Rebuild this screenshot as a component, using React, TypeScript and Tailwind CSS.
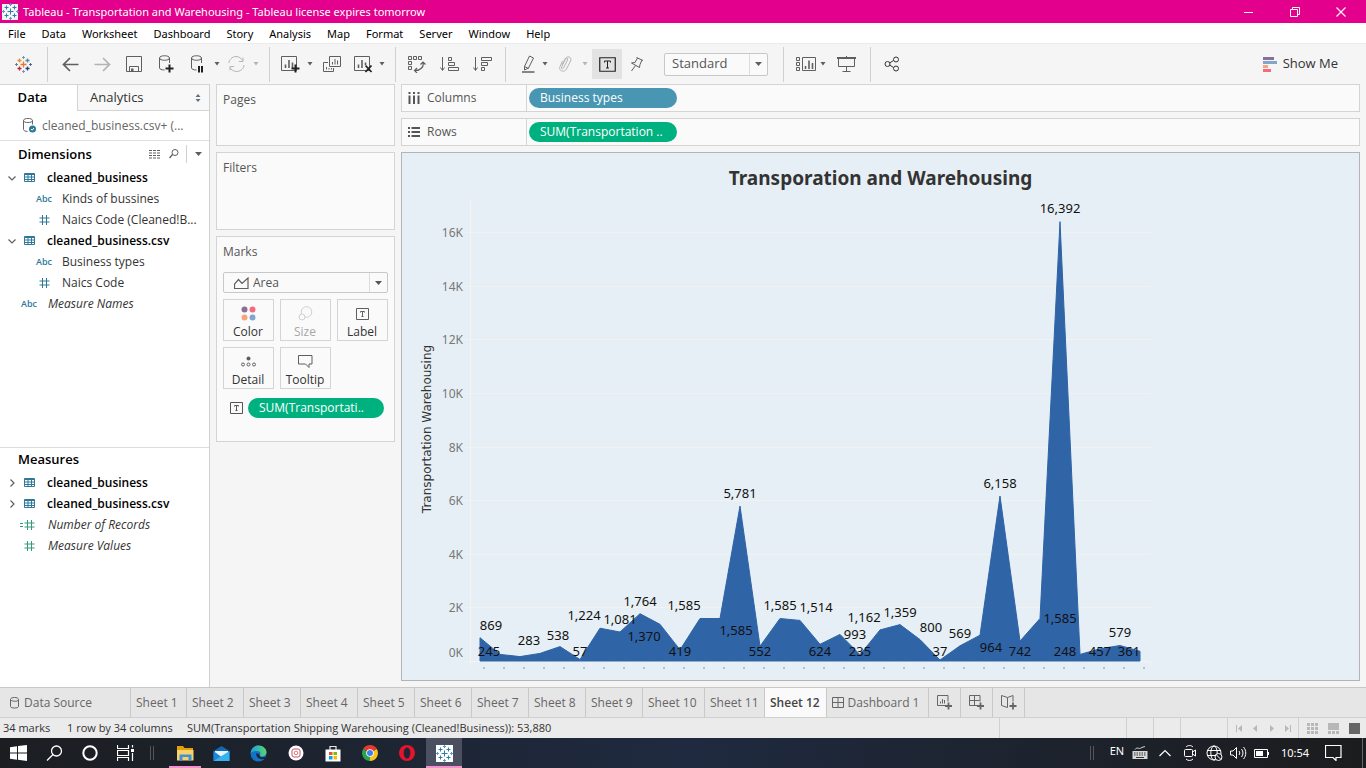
import React from "react";

type IconProps = { w: number; h: number; children: React.ReactNode; className?: string };

function Icon({ w, h, children, className = "" }: IconProps) {
  return (
    <svg
      width={w}
      height={h}
      viewBox={`0 0 ${w} ${h}`}
      fill="none"
      stroke="currentColor"
      aria-hidden="true"
      className={`shrink-0 ${className}`}
    >
      {children}
    </svg>
  );
}

function TableauMark({ colors, thick }: { colors: string[]; thick?: boolean }) {
  const [center, nw, ne, sw, se, n, s, w, e] = colors;
  const arm = thick ? 1.3 : 1;
  return (
    <Icon w={17} h={17}>
      <path d="M8.5 5.5v6M5.5 8.500h6" stroke={center} strokeWidth={arm} />
      <path d="M4.5 2.500v4M2.500 4.500h4" stroke={nw} strokeWidth={arm} />
      <path d="M12.5 2.500v4M10.500 4.500h4" stroke={ne} strokeWidth={arm} />
      <path d="M4.5 10.500v4M2.500 12.500h4" stroke={sw} strokeWidth={arm} />
      <path d="M12.5 10.500v4M10.500 12.500h4" stroke={se} strokeWidth={arm} />
      <path d="M8.5 0v3M7 1.500h3" stroke={n} />
      <path d="M8.5 14v3M7 15.500h3" stroke={s} />
      <path d="M1.500 7v3M0 8.500h3" stroke={w} />
      <path d="M15.500 7v3M14 8.500h3" stroke={e} />
    </Icon>
  );
}

const BLUE_MARK = ["#2f7cab", "#2f7cab", "#2f7cab", "#2f7cab", "#2f7cab", "#5c9cc0", "#5c9cc0", "#5c9cc0", "#5c9cc0"];
const COLOR_MARK = ["#e8762c", "#eb912c", "#59879b", "#c72035", "#1f447e", "#7199a6", "#7e96b0", "#5b879b", "#5b6591"];

function Caret({ className = "" }: { className?: string }) {
  return (
    <Icon w={8} h={4} className={className}>
      <path d="M1.500 0h5L4 3.500z" fill="currentColor" stroke="none" />
    </Icon>
  );
}

function ToolButton({ label, className, children }: { label: string; className: string; children: React.ReactNode }) {
  return (
    <button type="button" aria-label={label} className={`flex h-[30px] shrink-0 items-center justify-center ${className}`}>
      {children}
    </button>
  );
}

function Divider({ className }: { className: string }) {
  return <div className={`h-[35px] w-px shrink-0 bg-[#d0d0d0] ${className}`} />;
}

function TitleBar() {
  return (
    <header className="flex h-[23px] shrink-0 items-center bg-[#e3008c] text-white">
      <span className="ml-0.5 flex size-4 items-center justify-center bg-[#f4f4f4]">
        <TableauMark colors={BLUE_MARK} />
      </span>
      <h1 className="ml-[5px] flex-1 text-[11px] leading-4">
        Tableau - Transportation and Warehousing - Tableau license expires tomorrow
      </h1>
      <button type="button" aria-label="Minimize" className="flex h-5 w-[46px] items-center justify-center">
        <Icon w={10} h={10}><path d="M0 5.500h9" /></Icon>
      </button>
      <button type="button" aria-label="Restore" className="flex h-5 w-[46px] items-center justify-center">
        <Icon w={10} h={10}><path d="M.500 2.500h7v7h-7zM2.500 2.500v-2h7v7h-2" /></Icon>
      </button>
      <button type="button" aria-label="Close" className="mr-0.5 flex h-5 w-[46px] items-center justify-center">
        <Icon w={10} h={10}><path d="M.500.500l9 9M9.500.500l-9 9" strokeWidth="1.1" /></Icon>
      </button>
    </header>
  );
}

const MENUS = ["File", "Data", "Worksheet", "Dashboard", "Story", "Analysis", "Map", "Format", "Server", "Window", "Help"];

function MenuBar() {
  return (
    <nav className="flex h-5 shrink-0 items-center gap-4 bg-white pt-px pl-2 text-[11px] leading-4 text-black">
      {MENUS.map((m) => (
        <button type="button" key={m}>{m}</button>
      ))}
    </nav>
  );
}

function Toolbar() {
  return (
    <div className="flex h-[41px] shrink-0 items-center border-t border-[#ececec] bg-[#f5f5f5] text-[#5f5f5f]">
      <ToolButton label="Start page" className="w-[47px]"><TableauMark colors={COLOR_MARK} thick /></ToolButton>
      <Divider className="mr-1.5" />
      <ToolButton label="Undo" className="w-8">
        <Icon w={17} h={15}><path d="M16.500 7.500H1.500M8 1L1.500 7.500 8 14" strokeWidth="1.700" /></Icon>
      </ToolButton>
      <ToolButton label="Redo" className="w-8 text-[#b4b4b4]">
        <Icon w={17} h={15}><path d="M.500 7.500h15M9 1l6.500 6.500L9 14" strokeWidth="1.700" /></Icon>
      </ToolButton>
      <ToolButton label="Save" className="w-8">
        <Icon w={16} h={16}><path d="M.500.500h15v15H.500zM3.500 15.500v-5h9v5" /><path d="M5 12.500h2.500v3H5z" fill="currentColor" stroke="none" /></Icon>
      </ToolButton>
      <ToolButton label="New data source" className="w-8">
        <Icon w={16} h={18}>
          <path d="M1.500 3v10c0 1 2 2 5 2M11.500 3v5M1.500 3c0-3 10-3 10 0s-10 3-10 0z" />
          <path d="M11.500 9.500v8M7.500 13.500h8" stroke="#222" strokeWidth="2" />
        </Icon>
      </ToolButton>
      <ToolButton label="Pause auto updates" className="w-[30px]">
        <Icon w={14} h={18}>
          <path d="M1.500 3v10c0 1 2 2 5 2M11.500 3v5M1.500 3c0-3 10-3 10 0s-10 3-10 0z" />
          <path d="M9 11v6.500M12 11v6.500" stroke="#222" strokeWidth="2" />
        </Icon>
      </ToolButton>
      <Caret className="ml-px" />
      <ToolButton label="Refresh" className="w-[31px] text-[#b4b4b4]">
        <Icon w={17} h={16}>
          <path d="M1 7c0-3 3-6.500 7-6.500 3 0 5.500 2 6.500 4M16 9c0 3-3 6.500-7.500 6.500-3 0-5.500-2-6.500-4" />
          <path d="M15 1.500V5.500H11M2 14.500V10.500H6" />
        </Icon>
      </ToolButton>
      <Caret className="text-[#b4b4b4]" />
      <Divider className="mr-1 ml-[9px]" />
      <ToolButton label="New worksheet" className="w-8">
        <Icon w={19} h={18}>
          <path d="M.500 1.500h15v14H.500z" /><path d="M4.500 13V9.500M8 13V5M11.500 13V7.500" strokeWidth="1.600" />
          <path d="M14.500 9.500v8M10.500 13.500h8" stroke="#222" strokeWidth="2" />
        </Icon>
      </ToolButton>
      <Caret />
      <ToolButton label="Duplicate" className="ml-0.5 w-8">
        <Icon w={18} h={16}>
          <path d="M6.500.500h11v10h-11z" /><path d="M9.500 8.500V6M12 8.500V3M14.500 8.500V4.500M3.500 13.500V11M6 13.500V12M8.500 13.500V12" />
          <path d="M5 6.500H.500v9h10V12" />
        </Icon>
      </ToolButton>
      <ToolButton label="Clear sheet" className="w-[30px]">
        <Icon w={19} h={18}>
          <path d="M.500 1.500h15v14H.500z" /><path d="M4.500 13V9.500M8 13V5M11.500 10V7.500" strokeWidth="1.600" />
          <path d="M11.500 10.500l6 6.500M17.500 10.500l-6 6.500" stroke="#222" strokeWidth="1.800" />
        </Icon>
      </ToolButton>
      <Caret />
      <Divider className="mr-[5px] ml-[9px]" />
      <ToolButton label="Swap rows and columns" className="w-8">
        <Icon w={18} h={17}>
          <path d="M.500.500h3v3h-3zM5.500.500h3v3h-3zM10.500.500h3v3h-3zM.500 5.500h3v3h-3zM.500 10.500h3v3h-3z" />
          <path d="M15 6.500c1 4-2 8-8 8M12.500 8.500L15 6l2.500 2.500M9 12l-2.500 2.500L9 17" strokeWidth="1.200" />
        </Icon>
      </ToolButton>
      <ToolButton label="Sort ascending" className="w-[33px]">
        <Icon w={19} h={15}>
          <path d="M2.500 0v13M.500 10.500l2 3 2-3M8.500.500h3v3h-3zM8.500 5.500h6v3h-6zM8.500 10.500h10v3h-10z" />
        </Icon>
      </ToolButton>
      <ToolButton label="Sort descending" className="w-8">
        <Icon w={19} h={15}>
          <path d="M2.500 0v13M.500 10.500l2 3 2-3M8.500.500h10v3h-10zM8.500 5.500h6v3h-6zM8.500 10.500h3v3h-3z" />
        </Icon>
      </ToolButton>
      <Divider className="mr-[9px] ml-[7px]" />
      <ToolButton label="Highlight" className="w-[26px]">
        <Icon w={13} h={18}>
          <path d="M2.500 11.500L7.500 1l4 2-5 10-4 2zM2.500 11.500l4 2" />
          <path d="M0 17h12.500" strokeWidth="1.500" />
        </Icon>
      </ToolButton>
      <Caret />
      <ToolButton label="Group members" className="mr-[3px] ml-[3px] w-[26px] text-[#b4b4b4]">
        <Icon w={13} h={16}>
          <path d="M3 9l3-6c1-2 3.500-1 2.500 1L4.500 12c-.8 1.500-2.500.5-2-1l4-8c1.500-4 7-2 5 2L7.500 13C5.500 17-1 15 1 10.500L3.500 5" />
        </Icon>
      </ToolButton>
      <Caret className="text-[#b4b4b4]" />
      <ToolButton label="Show mark labels" className="ml-[3px] w-[30px] bg-[#e2e2e2] text-[#222]">
        <Icon w={17} h={15}>
          <path d="M.750.750h15.500v13.500H.750z" strokeWidth="1.200" />
          <path d="M5.500 5.500v-1.500h6v1.500M8.500 4v7M7 11h3" />
        </Icon>
      </ToolButton>
      <ToolButton label="Fix axes" className="w-[29px]">
        <Icon w={14} h={16}>
          <path d="M6.500 1.500l6.500 3M7.500 2L5 6.500 1.500 7l8 4.500L10 8.500 12 4M5.500 9.500L1.500 15" />
        </Icon>
      </ToolButton>
      <label className="relative ml-[13px] flex h-[23px] w-[104px] shrink-0 items-center rounded-xs border border-[#c8c8c8] bg-[#fafafa]">
        <select aria-label="Fit" className="size-full appearance-none bg-transparent pl-[7px] font-[Open_Sans,sans-serif] text-[13px] text-[#555]">
          <option>Standard</option>
        </select>
        <span className="pointer-events-none absolute inset-y-0 right-0 flex w-[18px] items-center justify-center border-l border-[#dcdcdc]">
          <Icon w={7} h={4}><path d="M0 0h7L3.500 4z" fill="currentColor" stroke="none" /></Icon>
        </span>
      </label>
      <Divider className="mr-[9px] ml-[15px]" />
      <ToolButton label="Show cards" className="w-[26px]">
        <Icon w={20} h={15}>
          <path d="M.500.500h3v3h-3zM.500 5.500h3v3h-3zM.500 10.500h3v3h-3zM6.500.500h13v13h-13z" />
          <path d="M9.500 12V9M13 12V3.500M16.500 12V6" strokeWidth="1.600" />
        </Icon>
      </ToolButton>
      <Caret />
      <ToolButton label="Presentation mode" className="ml-1.5 w-[26px]">
        <Icon w={19} h={17}>
          <path d="M0 2h19" strokeWidth="2" /><path d="M1.500 2v8.500h16V2M9.500 0v1M9.500 10.500v5M5.500 15.500h8" />
        </Icon>
      </ToolButton>
      <Divider className="mr-2 ml-[11px]" />
      <ToolButton label="Share" className="w-[26px] text-[#333]">
        <Icon w={16} h={16}>
          <circle cx="3.500" cy="8" r="2.500" /><circle cx="12" cy="3.500" r="2.500" /><circle cx="12" cy="12.500" r="2.500" />
          <path d="M5.500 7l4-2.500M5.500 9l4 2.500" />
        </Icon>
      </ToolButton>
      <button type="button" className="mr-7 ml-auto flex items-center gap-1.5 font-[Open_Sans,sans-serif] text-[13px] text-[#333]">
        <Icon w={14} h={15}>
          <g stroke="none">
            <path d="M0 0h11v3H0z" fill="#8a7098" /><path d="M0 4h14v3H0z" fill="#82a5cd" />
            <path d="M0 8h5v3H0z" fill="#f5a57d" /><path d="M0 12h8v3H0z" fill="#f8697c" />
          </g>
        </Icon>
        Show Me
      </button>
    </div>
  );
}

function TableGlyph() {
  return (
    <Icon w={11} h={9} className="text-[#2f7899]">
      <path d="M.500.500h10v8H.500zM.500 1.500h10M.500 4h10M.500 6.500h10M4 1.500v7M7.500 1.500v7" />
    </Icon>
  );
}

function Hash({ className }: { className: string }) {
  return (
    <Icon w={11} h={10} className={className}>
      <path d="M3.500 0v10M7.500 0v10M.500 3h10M.500 7h10" />
    </Icon>
  );
}

function TableRow({ name, open }: { name: string; open: boolean }) {
  return (
    <li className="flex h-[21px] items-center pl-2 font-semibold text-black">
      <Icon w={8} h={8} className="text-[#5f5f5f]">
        {open ? <path d="M.500 2.500L4 6l3.500-3.500" strokeWidth="1.200" /> : <path d="M2.500.500L6 4 2.500 7.500" strokeWidth="1.200" />}
      </Icon>
      <span className="ml-2 flex w-[23px]"><TableGlyph /></span>
      <span>{name}</span>
    </li>
  );
}

function FieldRow({ name, kind }: { name: string; kind: "abc" | "num" }) {
  return (
    <li className="flex h-[21px] items-center pl-9 text-[#333]">
      <span className="flex w-[26px] items-center">
        {kind === "abc" ? (
          <span className="text-[9px] leading-3 font-semibold text-[#2f7899]">Abc</span>
        ) : (
          <Hash className="ml-[3px] text-[#2f7899]" />
        )}
      </span>
      <span>{name}</span>
    </li>
  );
}

function DataPane() {
  return (
    <aside className="flex w-[210px] shrink-0 flex-col border-r border-[#d0d0d0] bg-white font-[Open_Sans,sans-serif] text-[12px]">
      <div role="tablist" className="flex h-[27px] shrink-0 border-t border-[#d4d4d4]">
        <button type="button" role="tab" aria-selected="true" className="w-[77px] pr-3 text-[13px] font-semibold text-black">
          Data
        </button>
        <button type="button" role="tab" aria-selected="false" className="flex flex-1 items-center border-b border-l border-[#d4d4d4] bg-[#f8f8f8] pr-2 pl-3 text-[13px] text-[#333]">
          Analytics
          <Icon w={6} h={8} className="ml-auto text-[#5f6f7c]">
            <path d="M3 0l2.500 3h-5zM3 8l2.500-3h-5z" fill="currentColor" stroke="none" />
          </Icon>
        </button>
      </div>
      <div className="flex h-[30px] shrink-0 items-center gap-1.5 border-b border-[#e0e0e0] pl-[23px] text-[#666]">
        <Icon w={13} h={15}>
          <path d="M.500 2.500v9c0 1 2 2 4 2M9.500 2.500v4M.500 2.500c0-2.700 9-2.700 9 0s-9 2.700-9 0z" />
          <circle cx="9.500" cy="11" r="3.500" fill="#2f7899" stroke="none" /><path d="M8 11l1.200 1.200L11 10" stroke="#fff" />
        </Icon>
        <span>cleaned_business.csv+ (...</span>
      </div>
      <section className="flex-1">
        <div className="flex h-[26px] items-center pl-[18px]">
          <h2 className="pt-px text-[13px] font-semibold text-black">Dimensions</h2>
          <button type="button" aria-label="View data" className="ml-auto text-[#5f5f5f]">
            <Icon w={12} h={9}><path d="M0 .500h12M0 3h12M0 5.500h12M0 8h12" strokeDasharray="3 1" /></Icon>
          </button>
          <button type="button" aria-label="Find field" className="ml-2 text-[#5f5f5f]">
            <Icon w={10} h={10}><circle cx="6" cy="3.500" r="3" /><path d="M3.500 5.500L.500 9" strokeWidth="1.300" /></Icon>
          </button>
          <span className="ml-[7px] h-[18px] w-px bg-[#d0d0d0]" />
          <button type="button" aria-label="Menu" className="mr-[7px] ml-2 text-[#5f5f5f]">
            <Icon w={7} h={4}><path d="M0 0h7L3.500 4z" fill="currentColor" stroke="none" /></Icon>
          </button>
        </div>
        <ul>
          <TableRow name="cleaned_business" open />
          <FieldRow name="Kinds of bussines" kind="abc" />
          <FieldRow name="Naics Code (Cleaned!B..." kind="num" />
          <TableRow name="cleaned_business.csv" open />
          <FieldRow name="Business types" kind="abc" />
          <FieldRow name="Naics Code" kind="num" />
          <li className="flex h-[21px] items-center pl-[21px] text-[#333] italic">
            <span className="w-[27px] text-[9px] leading-3 font-semibold text-[#2f7899] not-italic">Abc</span>
            Measure Names
          </li>
        </ul>
      </section>
      <section className="h-[240px] shrink-0 border-t border-[#dcdcdc]">
        <h2 className="flex h-6 items-center pl-[18px] text-[13px] font-semibold text-black">Measures</h2>
        <ul>
          <TableRow name="cleaned_business" open={false} />
          <TableRow name="cleaned_business.csv" open={false} />
          <li className="flex h-[21px] items-center pl-5 text-[#333] italic">
            <span className="flex w-7 items-center text-[#2f9e78]">
              <Icon w={3} h={4}><path d="M0 .500h3M0 3.500h3" /></Icon>
              <Hash className="ml-px" />
            </span>
            Number of Records
          </li>
          <li className="flex h-[21px] items-center pl-6 text-[#333] italic">
            <span className="w-6"><Hash className="text-[#2f9e78]" /></span>
            Measure Values
          </li>
        </ul>
      </section>
    </aside>
  );
}

function BoxedT() {
  return (
    <Icon w={13} h={12}>
      <path d="M.500.500h12v11H.500zM4.500 4.500V3.500h4v1M6.500 3.500v5M5.500 8.500h2" />
    </Icon>
  );
}

function MarkButton({ label, disabled, children }: { label: string; disabled?: boolean; children: React.ReactNode }) {
  return (
    <button
      type="button"
      disabled={disabled}
      className={`flex h-[42px] flex-col items-center justify-between border border-[#d4d4d4] pt-1.5 pr-px ${disabled ? "text-[#a8a8a8]" : "text-[#333]"}`}
    >
      <span className={`flex h-[15px] items-center ${disabled ? "text-[#d0d0d0]" : "text-[#5f5f5f]"}`}>{children}</span>
      <span className="text-[12px] leading-4">{label}</span>
    </button>
  );
}

function Cards() {
  const card = "border border-[#d4d4d4] bg-[#fafafa] px-1.5 pt-1.5 text-[12px] leading-[18px] text-[#555]";
  return (
    <div className="flex w-[179px] shrink-0 flex-col gap-1.5 font-[Open_Sans,sans-serif]">
      <section className={`h-[62px] ${card}`}><h2>Pages</h2></section>
      <section className={`h-[78px] ${card}`}><h2>Filters</h2></section>
      <section className={`h-[206px] ${card}`}>
        <h2>Marks</h2>
        <label className="relative mt-[11px] flex h-[21px] items-center rounded-xs border border-[#c8c8c8]">
          <Icon w={15} h={12} className="pointer-events-none absolute left-2.5 text-[#5f5f5f]">
            <path d="M.500 11.500V7L4.500 2.500 8 6.500l6-5.500v10.500z" strokeWidth="1.200" />
          </Icon>
          <select aria-label="Mark type" className="size-full appearance-none bg-transparent pl-[29px] leading-4">
            <option>Area</option>
          </select>
          <span className="pointer-events-none absolute inset-y-0 right-0 flex w-[18px] items-center justify-center border-l border-[#dcdcdc]">
            <Icon w={7} h={4}><path d="M0 0h7L3.500 4z" fill="currentColor" stroke="none" /></Icon>
          </span>
        </label>
        <div className="mt-1.5 grid grid-cols-3 gap-1.5">
          <MarkButton label="Color">
            <Icon w={15} h={15}>
              <g stroke="none">
                <circle cx="3.500" cy="3.500" r="3" fill="#8a7098" /><circle cx="11.500" cy="3.500" r="3" fill="#f8697c" />
                <circle cx="3.500" cy="11.500" r="3" fill="#f5a57d" /><circle cx="11.500" cy="11.500" r="3" fill="#82a5cd" />
              </g>
            </Icon>
          </MarkButton>
          <MarkButton label="Size" disabled>
            <Icon w={15} h={15}>
              <circle cx="8.500" cy="6" r="5.300" /><circle cx="4" cy="11" r="3" fill="#fafafa" />
            </Icon>
          </MarkButton>
          <MarkButton label="Label"><BoxedT /></MarkButton>
          <MarkButton label="Detail">
            <Icon w={15} h={12}>
              <circle cx="7.500" cy="2.500" r="2" fill="currentColor" stroke="none" />
              <circle cx="2" cy="8.500" r="1.500" /><circle cx="7.500" cy="8.500" r="1.500" /><circle cx="13" cy="8.500" r="1.500" />
            </Icon>
          </MarkButton>
          <MarkButton label="Tooltip">
            <Icon w={15} h={13}><path d="M.500.500h13.500v8.500H11v3.500L7.500 9h-7z" /></Icon>
          </MarkButton>
        </div>
        <div className="mt-[9px] flex items-center gap-[5px] pr-1 pl-[7px]">
          <BoxedT />
          <span className="h-5 flex-1 rounded-full bg-[#00b180] pl-[11px] leading-5 font-medium text-white">SUM(Transportati..</span>
        </div>
      </section>
    </div>
  );
}

function Shelf({ label, icon, pill, pillClass }: { label: string; icon: React.ReactNode; pill: string; pillClass: string }) {
  return (
    <div className="flex h-7 shrink-0 items-center border border-[#d4d4d4] bg-[#fafafa] text-[12px] text-[#555]">
      <div className="flex h-full w-[125px] items-center gap-[7px] border-r border-[#d4d4d4] pl-1.5">
        {icon}
        {label}
      </div>
      <span className={`ml-0.5 h-5 w-[148px] rounded-full pl-[11px] leading-5 font-medium text-white ${pillClass}`}>{pill}</span>
    </div>
  );
}

const VALUES = [
  869, 245, 163, 283, 538, 57, 1224, 1081, 1764, 1370, 419, 1585, 1585, 5781, 552, 1585, 1514, 624, 993, 235, 1162,
  1359, 800, 37, 569, 964, 6158, 742, 1585, 16392, 248, 457, 579, 361,
];

const LABELS: [string, number, number][] = [
  ["869", 491, 630], ["245", 489, 656], ["283", 529, 645], ["538", 558, 640], ["57", 580, 656],
  ["1,224", 584, 620], ["1,081", 620, 624], ["1,764", 640, 606], ["1,370", 644, 641], ["419", 680, 656],
  ["1,585", 684, 610], ["5,781", 740, 498], ["1,585", 736, 635], ["552", 760, 656], ["1,585", 780, 610],
  ["1,514", 816, 612], ["624", 820, 656], ["993", 855, 639], ["1,162", 864, 622], ["235", 860, 656],
  ["1,359", 900, 617], ["800", 931, 632], ["37", 940, 656], ["569", 960, 638], ["6,158", 1000, 488],
  ["964", 991, 652], ["742", 1020, 656], ["1,585", 1060, 623], ["248", 1065, 656], ["16,392", 1060, 213],
  ["457", 1100, 656], ["361", 1129, 656], ["579", 1120, 637],
];

const BASE = 661;
const yOf = (v: number) => BASE - (v / 1000) * 26.8;

function AreaChart() {
  const points = VALUES.map((v, i) => `${480 + i * 20},${yOf(v).toFixed(1)}`).join(" ");
  return (
    <svg width={760} height={487} viewBox="402 193 760 487" role="img" aria-label="Transportation Warehousing by business type" className="font-[Noto_Sans,sans-serif] text-[13px]">
      {[2, 4, 6, 8, 10, 12, 14, 16].map((k) => (
        <path key={k} d={`M466 ${Math.round(yOf(k * 1000)) + 0.5}H1151`} stroke="#f2f2f0" />
      ))}
      <path d="M470.500 199V661M466 661.500H1151" stroke="#f5f3f2" />
      {Array.from({ length: 35 }, (_, i) => (
        <path key={i} d={`M${470.5 + i * 20} 661v5`} stroke="#f5f3f2" />
      ))}
      {VALUES.map((_, i) => (
        <path key={i} d={`M${483 + i * 20} 668h2`} stroke="#b4c0c8" strokeWidth="2" />
      ))}
      <polygon points={`480,${BASE} ${points} 1140,${BASE}`} fill="#2f64a7" stroke="#2f64a7" />
      <g fill="#787878" textAnchor="end" className="text-[12px]">
        <text x={463} y={657}>0K</text>
        {[2, 4, 6, 8, 10, 12, 14, 16].map((k) => (
          <text key={k} x={463} y={Math.round(yOf(k * 1000)) + 5}>{k}K</text>
        ))}
      </g>
      <text transform="translate(431 429) rotate(-90)" textAnchor="middle" fill="#333" className="font-[DejaVu_Sans,sans-serif] text-[12px]">
        Transportation Warehousing
      </text>
      <g fill="#111" textAnchor="middle">
        {LABELS.map(([t, x, y]) => (
          <text key={`${x}-${y}`} x={x} y={y}>{t}</text>
        ))}
      </g>
    </svg>
  );
}

function Worksheet() {
  return (
    <main className="flex min-w-0 flex-1 flex-col gap-1.5 font-[Open_Sans,sans-serif]">
      <Shelf
        label="Columns"
        pill="Business types"
        pillClass="bg-[#4996b2]"
        icon={<Icon w={12} h={12}><path d="M1.500 0v2M6 0v2M10.500 0v2M1.500 3.500V12M6 3.500V12M10.500 3.500V12" strokeWidth="2" /></Icon>}
      />
      <Shelf
        label="Rows"
        pill="SUM(Transportation .."
        pillClass="bg-[#00b180]"
        icon={<Icon w={12} h={12}><path d="M0 2h2M0 6h2M0 10h2M3.500 2H12M3.500 6H12M3.500 10H12" strokeWidth="1.800" /></Icon>}
      />
      <section className="flex-1 overflow-hidden border border-[#b4b4b4] bg-[#e6eff5]">
        <h2 className="pt-2.5 text-center font-[Noto_Sans,sans-serif] text-[19px] leading-[30px] font-bold text-[#333]">
          Transporation and Warehousing
        </h2>
        <AreaChart />
      </section>
    </main>
  );
}

function SheetTabs() {
  const tab = "border-r border-[#c8c8c8] pl-[5px] text-left";
  return (
    <div className="flex h-[30px] shrink-0 items-stretch border-t border-[#c8c8c8] bg-[#e6e6e6] font-[Open_Sans,sans-serif] text-[12px] text-[#666]">
      <button type="button" className="flex w-[131px] items-center gap-[5px] border-r border-[#c8c8c8] pl-2.5">
        <Icon w={9} h={12}><path d="M.500 2.500v7c0 2 8 2 8 0v-7M.500 2.500c0-2.700 8-2.700 8 0s-8 2-8 0z" /></Icon>
        Data Source
      </button>
      {[1, 2, 3, 4, 5, 6, 7, 8, 9].map((n) => (
        <button type="button" key={n} className={`${n === 1 ? "w-14" : "w-[57px]"} ${tab}`}>Sheet {n}</button>
      ))}
      <button type="button" className={`w-[62px] ${tab}`}>Sheet 10</button>
      <button type="button" className={`w-[60px] ${tab}`}>Sheet 11</button>
      <button type="button" className={`w-[62px] bg-[#fafafa] font-semibold text-[#444] ${tab}`}>Sheet 12</button>
      <button type="button" className="flex w-[102px] items-center justify-center gap-1 border-r border-[#c8c8c8] pr-1">
        <Icon w={12} h={11}><path d="M.500.500h11v10H.500zM6 .500v10M.500 5.500h11" /></Icon>
        Dashboard 1
      </button>
      <button type="button" aria-label="New worksheet" className="flex w-8 items-center justify-center border-r border-[#c8c8c8]">
        <Icon w={16} h={15}><path d="M10 10.500H.500V.500h10.500v6M3.500 8.500V6.500M5.500 8.500V4M7.500 8.500V5" /><path d="M11.500 7.500v7M8 11h7" strokeWidth="1.800" /></Icon>
      </button>
      <button type="button" aria-label="New dashboard" className="flex w-8 items-center justify-center border-r border-[#c8c8c8]">
        <Icon w={16} h={15}><path d="M8 10.500H.500V.500h10.500v6M5.500.500v10M.500 5.500h10" /><path d="M11.500 7.500v7M8 11h7" strokeWidth="1.800" /></Icon>
      </button>
      <button type="button" aria-label="New story" className="flex w-8 items-center justify-center border-r border-[#c8c8c8]">
        <Icon w={16} h={15}><path d="M6.500 12.500L.500 10.500v-10l6 2 5.500-2v6M6.500 2.500v10" /><path d="M12 7.500v7M8.500 11h7" strokeWidth="1.800" /></Icon>
      </button>
    </div>
  );
}

function StatusBar() {
  return (
    <div className="flex h-[21px] shrink-0 items-center border-t border-[#d0d0d0] bg-[#ebebeb] pl-[3px] font-[Open_Sans,sans-serif] text-[11px] text-[#333]">
      <span className="w-16">34 marks</span>
      <span className="w-[120px]">1 row by 34 columns</span>
      <span className="mr-auto">SUM(Transportation Shipping Warehousing (Cleaned!Business)): 53,880</span>
      <div className="flex h-full text-[#b8b8b8]">
        <span className="w-[127px] border-l border-[#d0d0d0]" />
        <span className="w-[27px] border-l border-[#d0d0d0]" />
        <span className="w-[27px] border-l border-[#d0d0d0]" />
        <span className="w-[47px] border-l border-[#d0d0d0]" />
        <span className="flex w-[71px] items-center justify-around border-l border-[#d0d0d0] px-[3px]">
          {["M0 0h1v7H0zM6 0v7L2 3.500z", "M5 0v7L1 3.500z", "M2 0v7L6 3.500z", "M6 0h1v7H6zM1 0v7L5 3.500z"].map((d, i) => (
            <button type="button" key={d} aria-label={["First sheet", "Previous sheet", "Next sheet", "Last sheet"][i]}>
              <Icon w={7} h={7}><path d={d} fill="currentColor" stroke="none" /></Icon>
            </button>
          ))}
        </span>
        <span className="flex w-[68px] items-center justify-between border-l border-[#d0d0d0] pr-1.5 pl-2">
          <button type="button" aria-label="Sheet sorter">
            <Icon w={11} h={11}><path d="M0 1.500h11M0 5.500h11M0 9.500h11" strokeWidth="3" strokeDasharray="3 1" /></Icon>
          </button>
          <button type="button" aria-label="Filmstrip">
            <Icon w={11} h={11}><path d="M0 0h11v7H0z" fill="currentColor" stroke="none" /><path d="M0 9.500h11" strokeWidth="3" strokeDasharray="3 1" /></Icon>
          </button>
          <button type="button" aria-label="Sheet tabs" className="size-[11px] bg-[#666]" />
        </span>
      </div>
    </div>
  );
}

function TaskItem({ label, className = "w-[37px]", children }: { label: string; className?: string; children: React.ReactNode }) {
  return (
    <button type="button" aria-label={label} className={`flex h-full shrink-0 items-center justify-center ${className}`}>
      {children}
    </button>
  );
}

function Taskbar() {
  return (
    <footer className="flex h-[30px] shrink-0 items-center bg-linear-to-r from-[#1b1e21] via-[#1f2a40] to-[#1b1c1d] text-white">
      <TaskItem label="Start" className="w-9">
        <Icon w={17} h={16}><path d="M0 2.200L7 1.200V7.500H0zM8 1l9-1v7.500H8zM0 8.500h7v6.300L0 13.800zM8 8.500h9V16l-9-1.200z" fill="#fff" stroke="none" /></Icon>
      </TaskItem>
      <TaskItem label="Search" className="w-9">
        <Icon w={17} h={16}><circle cx="10.500" cy="6" r="5" strokeWidth="1.300" /><path d="M7 9.500L1 15.500" strokeWidth="1.300" /></Icon>
      </TaskItem>
      <TaskItem label="Cortana" className="w-9"><Icon w={16} h={16}><circle cx="8" cy="8" r="6.700" strokeWidth="2" /></Icon></TaskItem>
      <TaskItem label="Task view" className="w-[35px]">
        <Icon w={17} h={16}><path d="M.500 0v3.500h11V0M.500 16v-3.500h11V16M.500 5.500h11v5H.500zM15.500 0v2.500M15.500 8v8" strokeWidth="1.200" /><path d="M14 4h3v3h-3z" fill="#fff" stroke="none" /></Icon>
      </TaskItem>
      <span className="mr-[15px] ml-[7px] h-3.5 w-1 border-x border-[#555]" />
      <TaskItem label="File Explorer" className="w-8 border-b-2 border-[#f590cb] pt-0.5">
        <Icon w={17} h={15}>
          <g stroke="none">
            <path d="M0 0h6l1.500 2H16v12H0z" fill="#e3a008" /><path d="M0 4h16.500v10.500H0z" fill="#fbd26a" />
            <path d="M2.500 14.500V8.500h12v6h-3V11h-6v3.500z" fill="#3e93d8" />
          </g>
        </Icon>
      </TaskItem>
      <TaskItem label="Mail" className="ml-0.5 w-[37px]">
        <Icon w={17} h={15}>
          <g stroke="none">
            <path d="M.500 5L8.500 0l8 5v10H.500z" fill="#1267ae" /><path d="M2 5h13v6H2z" fill="#e8f4fc" />
            <path d="M.500 5l8 6-8 4z" fill="#1c86d8" /><path d="M16.500 5v10H.500z" fill="#38b1f0" />
          </g>
        </Icon>
      </TaskItem>
      <TaskItem label="Edge">
        <Icon w={17} h={17}>
          <defs><linearGradient id="edge" x1="0" y1="0" x2="1" y2="0"><stop offset="0" stopColor="#1b9de2" /><stop offset="1" stopColor="#5bd66a" /></linearGradient></defs>
          <circle cx="8.500" cy="8.500" r="8" fill="#1372c4" stroke="none" />
          <path d="M.500 8C1 3.500 4.500.500 8.500.500c4.800 0 8 3.500 8 6.500 0 3-2.500 4.500-5 4.500-1.500 0-2.500-.7-1.500-1.800 1-1.200.5-3.700-3-3.700-3 0-5 1-6.500 2z" fill="url(#edge)" stroke="none" />
          <path d="M6.500 8c-1 3 1.500 7 8 6l2-2.500c-3 1.500-7 1-7-2z" fill="#1b2740" stroke="none" />
        </Icon>
      </TaskItem>
      <TaskItem label="Instagram">
        <Icon w={16} h={16}><circle cx="8" cy="8" r="7.500" fill="#fff" stroke="none" /><rect x="4" y="4" width="8" height="8" rx="2" stroke="#c9507f" /><circle cx="8" cy="8" r="1.800" stroke="#e08060" /></Icon>
      </TaskItem>
      <TaskItem label="Store">
        <Icon w={16} h={17}>
          <path d="M5 5V1.500h6V5" stroke="#e8e8e8" strokeWidth="1.200" />
          <g stroke="none">
            <path d="M.500 4.500h15v12H.500z" fill="#fff" /><path d="M4 7h3.500v3H4z" fill="#f25022" /><path d="M8.500 7H12v3H8.500z" fill="#7fba00" />
            <path d="M4 11h3.500v3.500H4z" fill="#00a4ef" /><path d="M8.500 11H12v3.500H8.500z" fill="#ffb900" />
          </g>
        </Icon>
      </TaskItem>
      <TaskItem label="Chrome">
        <Icon w={16} h={16}>
          <g stroke="none">
            <path d="M8 8L1.100 4A8 8 0 0 1 14.900 4z" fill="#e33b2e" /><path d="M8 8l6.900-4A8 8 0 0 1 8 16z" fill="#fcc31e" /><path d="M8 8v8A8 8 0 0 1 1.100 4z" fill="#2ba24c" />
            <circle cx="8" cy="8" r="3.800" fill="#fff" /><circle cx="8" cy="8" r="3" fill="#3f7fee" />
          </g>
        </Icon>
      </TaskItem>
      <TaskItem label="Opera">
        <Icon w={16} h={16}><circle cx="8" cy="8" r="8" fill="#e3142b" stroke="none" /><ellipse cx="8" cy="8" rx="3.300" ry="5.500" fill="#1f2536" stroke="none" /></Icon>
      </TaskItem>
      <TaskItem label="Tableau" className="ml-px w-9 border-b-2 border-[#f590cb] bg-[#4a5060] pt-0.5">
        <span className="bg-white"><TableauMark colors={BLUE_MARK} /></span>
      </TaskItem>

      <div className="ml-auto flex h-full items-center font-[Noto_Sans,sans-serif] text-[11px]">
        <span className="mr-3.5 h-3.5 w-1 border-x border-[#555]" />
        <button type="button" className="w-[18px] pb-1">EN</button>
        <TaskItem label="Keyboard" className="ml-0.5 w-6">
          <Icon w={16} h={14} className="text-[#d8d8d8]">
            <path d="M3 3.500c2-3 4 0 6-1.500 1-1 3-1 4-1.500" />
            <path d="M.500 5h15v8H.500z" fill="#d8d8d8" stroke="none" /><path d="M2 7h12M2 9h12" stroke="#333" strokeDasharray="1.500 1" /><path d="M4 11.500h8" stroke="#333" />
          </Icon>
        </TaskItem>
        <TaskItem label="Show hidden icons" className="w-[26px]"><Icon w={12} h={8}><path d="M.500 7L6 1.500 11.500 7" strokeWidth="1.200" /></Icon></TaskItem>
        <TaskItem label="Meet now" className="w-6"><Icon w={12} h={16}><rect x=".5" y="4.500" width="8" height="7" rx="1" /><path d="M8.500 7l3-2v6l-3-2M2 2c2-2 5-2 7 0M2 14c2 2 5 2 7 0" /></Icon></TaskItem>
        <TaskItem label="Network" className="w-6">
          <Icon w={17} h={16}><circle cx="8" cy="8" r="7" /><ellipse cx="8" cy="8" rx="3.200" ry="7" /><path d="M1 5.500h14M1 10.500h9" /><circle cx="12.500" cy="12" r="3.500" fill="#1c1e21" /><path d="M10 9.500l5 5" /></Icon>
        </TaskItem>
        <TaskItem label="Volume" className="w-6"><Icon w={17} h={14}><path d="M.500 5h2.500l3.500-3.500v11L3 9H.500zM9 5c1 1.500 1 2.500 0 4M11.500 3c2 2.500 2 5.500 0 8M13.500 1c3 3.500 3 8.500 0 12" /></Icon></TaskItem>
        <TaskItem label="Battery" className="w-6"><Icon w={16} h={9}><path d="M.500.500h13v8H.500zM14.500 3v3" /><path d="M2 2h7v5H2z" fill="#fff" stroke="none" /></Icon></TaskItem>
        <span className="ml-[7px] w-9">10:54</span>
        <TaskItem label="Notifications" className="w-8"><Icon w={17} h={16}><path d="M.500.500h15.500v12H11v3l-3-3H.500z" strokeWidth="1.200" /></Icon></TaskItem>
        <span className="mr-[3px] ml-[13px] h-full w-px bg-[#666]" />
      </div>
    </footer>
  );
}

export default function App() {
  return (
    <div className="flex h-screen min-h-[720px] min-w-[1200px] flex-col overflow-hidden bg-[#f5f5f5] font-[Noto_Sans,sans-serif]">
      <TitleBar />
      <MenuBar />
      <Toolbar />
      <div className="flex min-h-0 flex-1">
        <DataPane />
        <div className="flex min-w-0 flex-1 gap-1.5 pr-1.5 pb-1.5 pl-1.5">
          <Cards />
          <Worksheet />
        </div>
      </div>
      <SheetTabs />
      <StatusBar />
      <Taskbar />
    </div>
  );
}
